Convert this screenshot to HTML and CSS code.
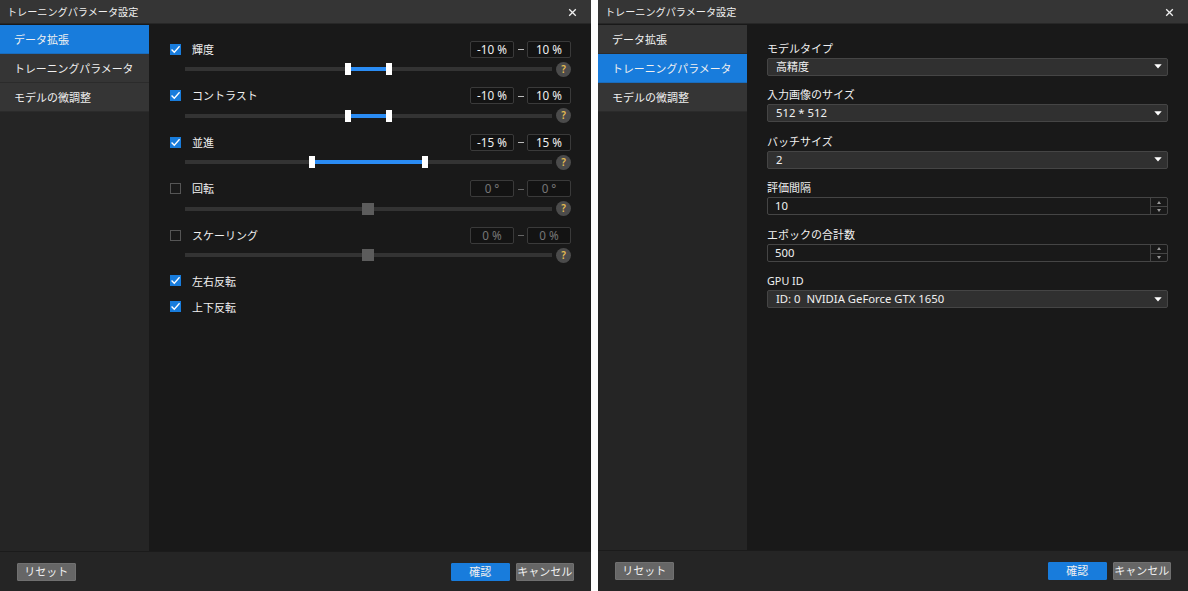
FILE: index.html
```html
<!DOCTYPE html>
<html lang="ja">
<head>
<meta charset="utf-8">
<title>トレーニングパラメータ設定</title>
<link rel="stylesheet" href="styles.css">
</head>
<body>
<svg class="defs" width="0" height="0">
  <symbol id="close" viewBox="0 0 9 9"><path d="M1.2 1.2L7.8 7.8M7.8 1.2L1.2 7.8" fill="none" stroke="#f0f0f0" stroke-width="1.3"/></symbol>
  <symbol id="check" viewBox="0 0 10 10"><path d="M1.4 5L3.9 7.5L8.7 2.1" fill="none" stroke="#fff" stroke-width="1.2"/></symbol>
  <symbol id="caret" viewBox="0 0 8 5"><path d="M0.3 0.3H7.7L4 4.6Z" fill="#fff"/></symbol>
  <symbol id="up" viewBox="0 0 4 3"><path d="M0 3L2 0L4 3Z" fill="#999"/></symbol>
  <symbol id="down" viewBox="0 0 4 3"><path d="M0 0L2 3L4 0Z" fill="#999"/></symbol>
</svg>
<main class="stage">
  <section class="dialog">
    <header class="titlebar"><h1 class="title">トレーニングパラメータ設定</h1><svg class="close"><use href="#close"/></svg></header>
    <div class="body">
      <nav class="sidebar">
        <a class="tab active">データ拡張</a>
        <a class="tab long">トレーニングパラメータ</a>
        <a class="tab">モデルの微調整</a>
      </nav>
      <div class="content ranges">
        <div class="range">
          <div class="head"><span class="box on"><svg><use href="#check"/></svg></span><span class="name">輝度</span><span class="num">-10 %</span><span class="dash"></span><span class="num">10 %</span></div>
          <div class="slider"><div class="track"><span class="fill" style="left:160px;width:47px"></span></div><span class="help">?</span></div>
        </div>
        <div class="range">
          <div class="head"><span class="box on"><svg><use href="#check"/></svg></span><span class="name">コントラスト</span><span class="num">-10 %</span><span class="dash"></span><span class="num">10 %</span></div>
          <div class="slider"><div class="track"><span class="fill" style="left:160px;width:47px"></span></div><span class="help">?</span></div>
        </div>
        <div class="range">
          <div class="head"><span class="box on"><svg><use href="#check"/></svg></span><span class="name">並進</span><span class="num">-15 %</span><span class="dash"></span><span class="num">15 %</span></div>
          <div class="slider"><div class="track"><span class="fill" style="left:124px;width:119px"></span></div><span class="help">?</span></div>
        </div>
        <div class="range off">
          <div class="head"><span class="box"></span><span class="name">回転</span><span class="num">0 °</span><span class="dash"></span><span class="num">0 °</span></div>
          <div class="slider"><div class="track"><span class="knob"></span></div><span class="help">?</span></div>
        </div>
        <div class="range off">
          <div class="head"><span class="box"></span><span class="name">スケーリング</span><span class="num">0 %</span><span class="dash"></span><span class="num">0 %</span></div>
          <div class="slider"><div class="track"><span class="knob"></span></div><span class="help">?</span></div>
        </div>
        <div class="flip"><span class="box on"><svg><use href="#check"/></svg></span><span class="name">左右反転</span></div>
        <div class="flip"><span class="box on"><svg><use href="#check"/></svg></span><span class="name">上下反転</span></div>
      </div>
    </div>
    <footer class="footer"><button class="btn reset">リセット</button><button class="btn primary">確認</button><button class="btn">キャンセル</button></footer>
  </section>

  <section class="dialog second">
    <header class="titlebar"><h1 class="title">トレーニングパラメータ設定</h1><svg class="close"><use href="#close"/></svg></header>
    <div class="body">
      <nav class="sidebar">
        <a class="tab">データ拡張</a>
        <a class="tab long active">トレーニングパラメータ</a>
        <a class="tab">モデルの微調整</a>
      </nav>
      <div class="content fields">
        <div class="field"><span class="label">モデルタイプ</span><div class="select"><span>高精度</span><svg><use href="#caret"/></svg></div></div>
        <div class="field"><span class="label">入力画像のサイズ</span><div class="select"><span class="latin">512 * 512</span><svg><use href="#caret"/></svg></div></div>
        <div class="field"><span class="label">バッチサイズ</span><div class="select"><span class="latin">2</span><svg><use href="#caret"/></svg></div></div>
        <div class="field"><span class="label">評価間隔</span><div class="spin"><span class="value latin">10</span><span class="steps"><i><svg><use href="#up"/></svg></i><i><svg><use href="#down"/></svg></i></span></div></div>
        <div class="field"><span class="label">エポックの合計数</span><div class="spin"><span class="value latin">500</span><span class="steps"><i><svg><use href="#up"/></svg></i><i><svg><use href="#down"/></svg></i></span></div></div>
        <div class="field"><span class="label gpu">GPU ID</span><div class="select"><span class="latin">ID: 0&nbsp; NVIDIA GeForce GTX 1650</span><svg><use href="#caret"/></svg></div></div>
      </div>
    </div>
    <footer class="footer"><button class="btn reset">リセット</button><button class="btn primary">確認</button><button class="btn">キャンセル</button></footer>
  </section>
</main>
</body>
</html>
```
FILE: styles.css
```css
* { box-sizing: border-box; }
body {
  margin: 0;
  background: #fff;
  color: #f0f0f0;
  font: 11px/16px "Noto Sans", "Noto Sans CJK JP", sans-serif;
}
.defs { position: absolute; }
svg { display: block; }
.stage { display: grid; grid-template-columns: 591px 590px; gap: 7px; height: 591px; }
.dialog {
  display: grid;
  grid-template-rows: 25px 526px 40px;
  background: #191919;
  overflow: hidden;
}
.second { grid-template-rows: 25px 525px 41px; }

.titlebar {
  display: flex;
  align-items: center;
  justify-content: space-between;
  height: 24px;
  padding: 1px 14px 0 7px;
  background: #353535;
  border-bottom: 1px solid #272727;
}
.title { margin: 0; font-size: 10.15px; font-weight: 400; white-space: nowrap; }
.close { width: 9px; height: 9px; }

.body { display: grid; grid-template-columns: 149px 1fr; }
.sidebar { background: #252525; }
.tab {
  display: block;
  height: 29px;
  padding: 0 0 0 14px;
  line-height: 29px;
  background: #353535;
  border-bottom: 1px solid #2b2b2b;
  white-space: nowrap;
}
.tab.long { font-size: 10.9px; }
.tab.active { background: #187cdc; border-bottom-color: #1a6cbc; }

.ranges { padding: 15.5px 20px 0 20.5px; }
.range { height: 46.5px; }
.head { display: flex; align-items: center; height: 17px; }
.box { width: 11px; height: 11px; border: 1px solid #555; flex: none; }
.box.on { border: 0; background: #187cdc; }
.box svg { width: 11px; height: 11px; }
.name { flex: 1; padding: 1px 0 0 11.5px; white-space: nowrap; }
.num {
  width: 44px;
  height: 17px;
  border: 1px solid #3a3a3a;
  border-radius: 2px;
  background: #131313;
  font-size: 11.7px;
  line-height: 15px;
  text-align: center;
}
.dash { width: 6px; height: 1px; margin: 1px 3.5px 0; background: #bbb; }
.slider {
  display: flex;
  align-items: center;
  justify-content: space-between;
  height: 15px;
  margin-top: 4px;
  padding-left: 15px;
}
.track { position: relative; width: 367px; height: 4px; background: #333; }
.fill {
  position: absolute;
  top: -4px;
  height: 12px;
  border: solid #fff;
  border-width: 0 6px;
  background: linear-gradient(#2a8cf4, #2a8cf4) center / 100% 4px no-repeat;
}
.knob { position: absolute; left: 177.5px; top: -4px; width: 12px; height: 12px; background: #5c5c5c; }
.help {
  width: 15px;
  height: 15px;
  border-radius: 50%;
  background: #4b4b4b;
  color: #e5bc52;
  font-weight: 600;
  font-size: 10px;
  line-height: 15px;
  text-align: center;
}
.off .num { color: #777; }
.off .dash { background: #666; }
.flip { display: flex; align-items: center; height: 16px; margin-bottom: 10px; }
.flip .box { margin-top: -1px; }

.fields { padding: 14.5px 20px 0; }
.field { height: 46.5px; }
.label { display: block; height: 18px; line-height: 17px; white-space: nowrap; }
.label.gpu { font-size: 10.8px; }
.select, .spin {
  display: flex;
  align-items: center;
  justify-content: space-between;
  height: 18px;
  border: 1px solid #454545;
  border-radius: 2px;
  white-space: pre;
}
.latin { font-size: 11.3px; }
.select { padding: 0 5px 0 8px; background: #303030; }
.select svg { width: 8px; height: 5px; }
.value { padding-left: 7px; }
.steps { display: grid; grid-template-rows: 8px 8px; width: 17px; height: 16px; border-left: 1px solid #454545; }
.steps i { display: grid; place-items: center; }
.steps i + i { border-top: 1px solid #454545; }
.steps svg { width: 4px; height: 3px; }

.footer {
  display: flex;
  align-items: flex-start;
  padding: 10.5px 17px 0;
  background: #252525;
  border-top: 1px solid #1b1b1b;
}
.btn {
  width: 58.5px;
  height: 18px;
  margin: 0 0 0 6px;
  padding: 0;
  border: 1px solid #707070;
  border-radius: 1px;
  background: #666;
  color: #f0f0f0;
  font: inherit;
  line-height: 16px;
  white-space: nowrap;
}
.btn.reset { margin: 0 auto 0 0; }
.btn.primary { background: #187cdc; border-color: #187cdc; }
```
